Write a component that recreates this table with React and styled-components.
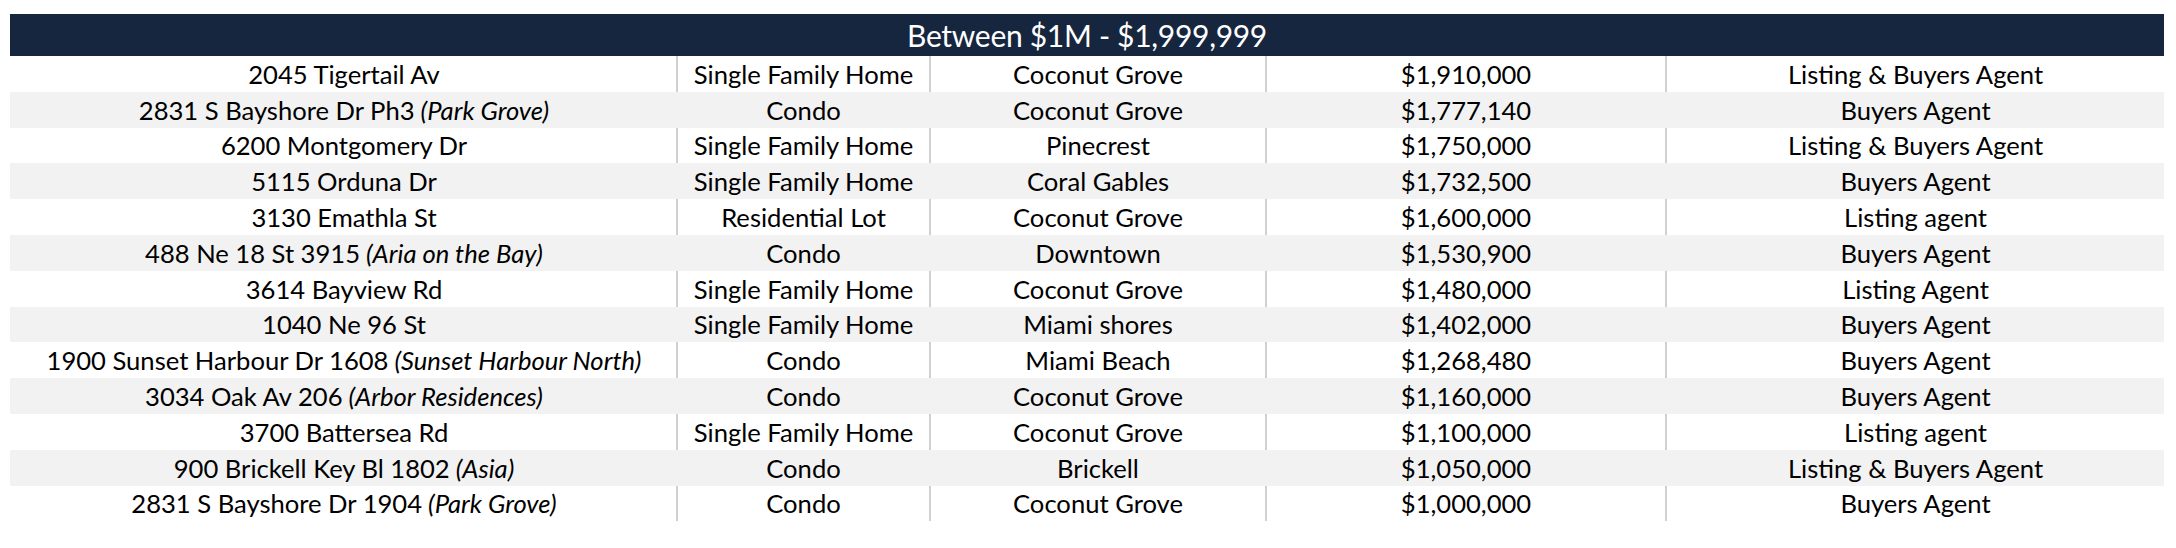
import React from 'react';
import styled, { createGlobalStyle } from 'styled-components';

const GlobalStyle = createGlobalStyle`
  body {
    margin: 0;
    background: #ffffff;
    font-family: Lato, "Open Sans", "Liberation Sans", sans-serif;
  }
`;

const Page = styled.div`
  width: 2176px;
  height: 548px;
  padding: 14px 0 0 10px;
  box-sizing: border-box;
  background: #ffffff;
`;

const Sheet = styled.div`
  width: 2154px;
  display: flex;
  flex-direction: column;
`;

const Banner = styled.div`
  height: 42px;
  background: #17263f;
  color: #ffffff;
  display: flex;
  align-items: center;
  justify-content: center;
  font-size: 30px;
  letter-spacing: -0.3px;
`;

const Row = styled.div`
  display: grid;
  grid-template-columns: 666px 253px 336px 400px 499px;
  height: 35.8px;
  background: ${props => (props.$shaded ? '#f2f2f2' : '#ffffff')};
`;

const Cell = styled.div`
  display: flex;
  align-items: center;
  justify-content: center;
  white-space: pre;
  font-size: 25.6px;
  color: #000000;
  box-sizing: border-box;
  border-left: 2px solid ${props => (props.$line ? '#d0d0d0' : 'transparent')};
`;

const Note = styled.em`
  font-style: italic;
`;

const sales = [
  ['2045 Tigertail Av', null, 'Single Family Home', 'Coconut Grove', '$1,910,000', 'Listing & Buyers Agent'],
  ['2831 S Bayshore Dr Ph3', 'Park Grove', 'Condo', 'Coconut Grove', '$1,777,140', 'Buyers Agent'],
  ['6200 Montgomery Dr', null, 'Single Family Home', 'Pinecrest', '$1,750,000', 'Listing & Buyers Agent'],
  ['5115 Orduna Dr', null, 'Single Family Home', 'Coral Gables', '$1,732,500', 'Buyers Agent'],
  ['3130 Emathla St', null, 'Residential Lot', 'Coconut Grove', '$1,600,000', 'Listing agent'],
  ['488 Ne 18 St 3915', 'Aria on the Bay', 'Condo', 'Downtown', '$1,530,900', 'Buyers Agent'],
  ['3614 Bayview Rd', null, 'Single Family Home', 'Coconut Grove', '$1,480,000', 'Listing Agent'],
  ['1040 Ne 96 St', null, 'Single Family Home', 'Miami shores', '$1,402,000', 'Buyers Agent'],
  ['1900 Sunset Harbour Dr 1608', 'Sunset Harbour North', 'Condo', 'Miami Beach', '$1,268,480', 'Buyers Agent'],
  ['3034 Oak Av 206', 'Arbor Residences', 'Condo', 'Coconut Grove', '$1,160,000', 'Buyers Agent'],
  ['3700 Battersea Rd', null, 'Single Family Home', 'Coconut Grove', '$1,100,000', 'Listing agent'],
  ['900 Brickell Key Bl 1802', 'Asia', 'Condo', 'Brickell', '$1,050,000', 'Listing & Buyers Agent'],
  ['2831 S Bayshore Dr 1904', 'Park Grove', 'Condo', 'Coconut Grove', '$1,000,000', 'Buyers Agent'],
];

const App = () => (
  <Page>
    <GlobalStyle />
    <Sheet>
      <Banner>Between $1M - $1,999,999</Banner>
      {sales.map(([address, building, type, area, price, role], i) => {
        const shaded = i % 2 === 1;
        return (
          <Row key={address} $shaded={shaded}>
            <Cell>
              {address}
              {building && <Note>{` (${building})`}</Note>}
            </Cell>
            <Cell $line={!shaded}>{type}</Cell>
            <Cell $line={!shaded}>{area}</Cell>
            <Cell $line={!shaded}>{price}</Cell>
            <Cell $line={!shaded}>{role}</Cell>
          </Row>
        );
      })}
    </Sheet>
  </Page>
);

export default App;
